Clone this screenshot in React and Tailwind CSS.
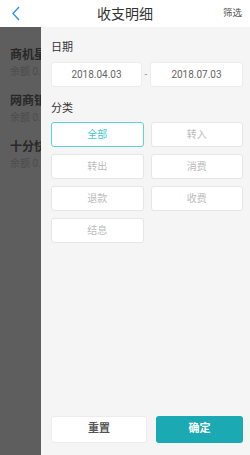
import React from 'react'

const cats = ['全部', '转入', '转出', '消费', '退款', '收费', '结息']

export default function App() {
  return (
    <div className="w-[250px] h-[455px] flex flex-col bg-white overflow-hidden font-['Roboto','Noto_Sans_CJK_SC',sans-serif]">
      {/* header */}
      <div className="h-[27px] flex items-center relative bg-white shrink-0">
        <svg className="absolute left-[11px] top-[6px] w-[10px] h-[15px]" viewBox="0 0 10 15" fill="none">
          <polyline points="8,1 2,7.5 8,14" stroke="#2b95f0" strokeWidth="1.4" />
        </svg>
        <div className="w-full text-center text-[14px] text-[#333] leading-none">收支明细</div>
        <div className="absolute right-[8px] top-[8px] text-[9.5px] text-[#555] leading-none">筛选</div>
      </div>

      <div className="flex-1 flex min-h-0">
        {/* dimmed list behind */}
        <div className="w-[41px] shrink-0 bg-[#5e5e5e] overflow-hidden pl-[10px] pt-[21px]">
          {[['商机星', '余额 0.1'], ['网商银', '余额 0.0'], ['十分快', '余额 0.1']].map(([t, s]) => (
            <div key={t} className="h-[46px] whitespace-nowrap">
              <div className="text-[12px] font-bold text-[#282828] leading-[14px]">{t}</div>
              <div className="text-[10px] text-[#4c4c4c] leading-[12px] mt-[4px]">{s}</div>
            </div>
          ))}
        </div>

        {/* filter panel */}
        <div className="flex-1 bg-[#f5f5f5] flex flex-col pl-[10px] pr-[8px]">
          <div className="text-[11px] text-[#333] leading-none mt-[15px]">日期</div>
          <div className="flex items-center mt-[9px]">
            <div className="w-[91px] h-[25px] bg-white border border-[#ececec] rounded-[3px] flex items-center justify-center text-[10px] text-[#666]">2018.04.03</div>
            <div className="flex-1 text-center text-[10px] text-[#999]">-</div>
            <div className="w-[93px] h-[25px] bg-white border border-[#ececec] rounded-[3px] flex items-center justify-center text-[10px] text-[#666]">2018.07.03</div>
          </div>
          <div className="text-[11px] text-[#333] leading-none mt-[16px]">分类</div>
          <div className="grid grid-cols-2 gap-x-[7px] gap-y-[7px] mt-[8px]">
            {cats.map((c, i) => (
              <div
                key={c}
                className={
                  i === 0
                    ? 'h-[25px] bg-white border border-[#5ad6da] rounded-[3px] flex items-center justify-center text-[10px] text-[#3fc9ce]'
                    : 'h-[25px] bg-white border border-[#e6e6e6] rounded-[3px] flex items-center justify-center text-[10px] text-[#bbbbbb]'
                }
              >
                {c}
              </div>
            ))}
          </div>

          <div className="flex-1" />
          <div className="flex gap-[9px] pb-[12px]">
            <div className="w-[96px] h-[27px] bg-white border border-[#ececec] rounded-[3px] flex items-center justify-center text-[11px] font-bold text-[#555]">重置</div>
            <div className="w-[87px] h-[27px] bg-[#1ba9b3] rounded-[3px] flex items-center justify-center text-[11px] font-bold text-white">确定</div>
          </div>
        </div>
      </div>
    </div>
  )
}
